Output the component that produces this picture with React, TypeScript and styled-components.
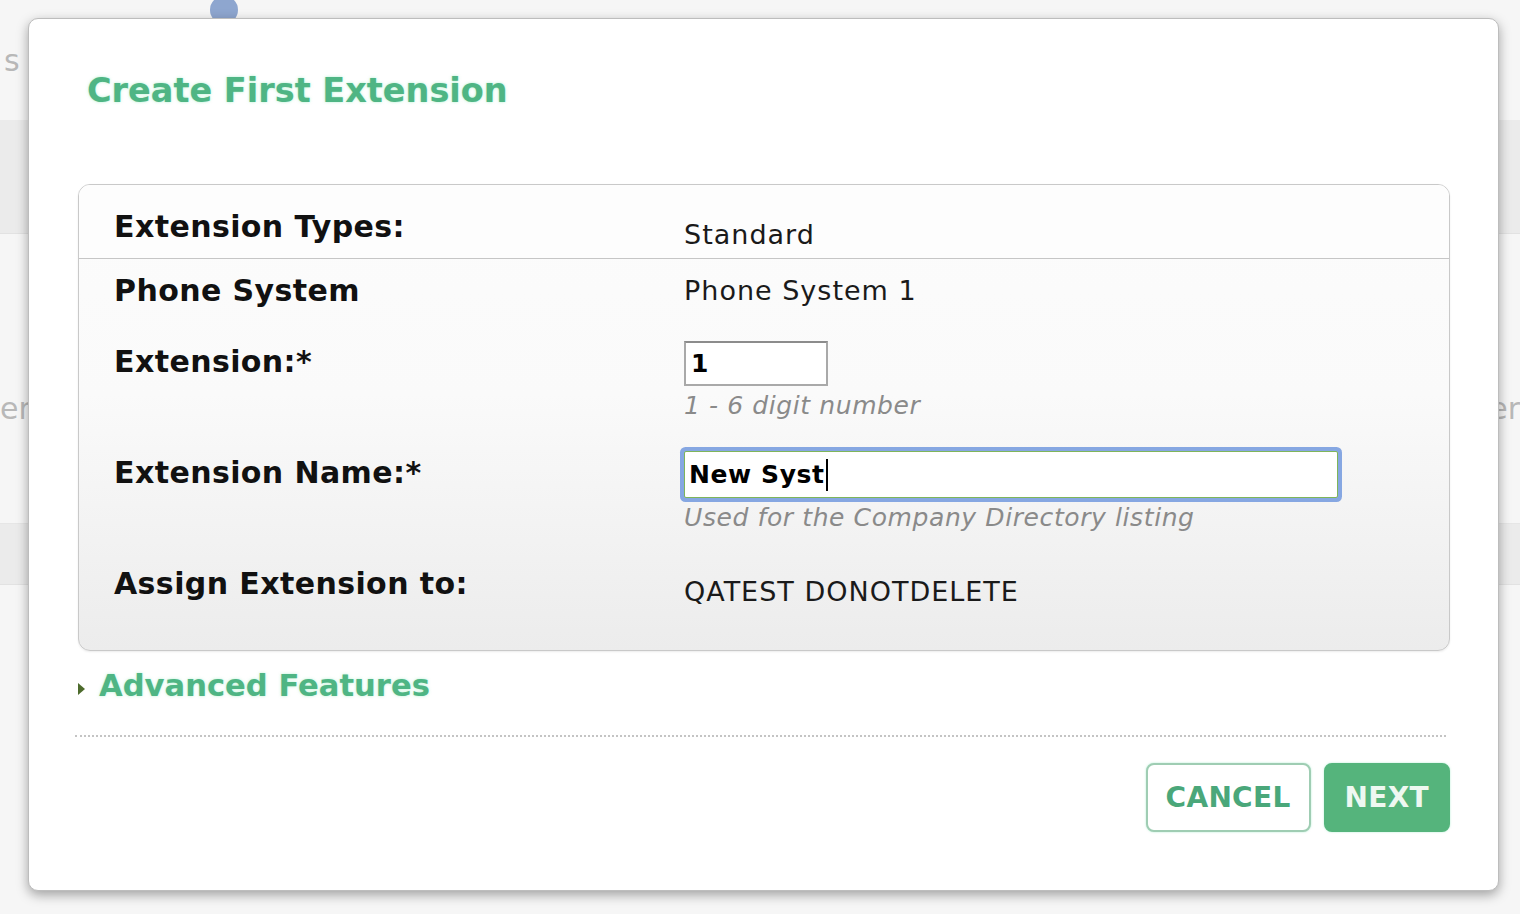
import React from "react";
import styled, { createGlobalStyle } from "styled-components";

const GREEN = "#4fb584";
const FONT = `"DejaVu Sans", Verdana, "Liberation Sans", sans-serif`;

//#region STYLES
const GlobalStyle = createGlobalStyle`
  html, body {
    margin: 0;
    padding: 0;
    background: #f6f6f6;
    font-family: ${FONT};
    overflow: hidden;
  }
`;

const Page = styled.div`
  position: relative;
  width: 1520px;
  height: 914px;
  overflow: hidden;
  background: #f6f6f6;
  color: #b8b8b8;
`;

// the app page sitting behind the modal
const PageHeader = styled.div`
  height: 120px;
  display: flex;
  align-items: center;
  padding-left: 4px;
  font-size: 30px;
  gap: 190px;
`;

const Badge = styled.span`
  width: 28px;
  height: 28px;
  border-radius: 50%;
  background: #8ea6cf;
  align-self: flex-start;
  margin-top: -4px;
`;

const PageBand = styled.div<{ $h: number }>`
  height: ${(p) => p.$h}px;
  background: #ebebeb;
  border-bottom: 1px solid #e2e2e2;
`;

const PageRow = styled.div<{ $h: number }>`
  height: ${(p) => p.$h}px;
  box-sizing: border-box;
  padding-top: 60px;
  display: flex;
  align-items: center;
  justify-content: space-between;
  font-size: 30px;
  border-bottom: 1px solid #e6e6e6;
`;

const Dialog = styled.div`
  position: absolute;
  left: 28px;
  top: 18px;
  width: 1471px;
  height: 873px;
  box-sizing: border-box;
  background: #fff;
  border: 1px solid #bdbdbd;
  border-radius: 10px;
  box-shadow: 0 4px 12px rgba(0, 0, 0, 0.35);
  padding: 52px 48px 0 49px;
  display: flex;
  flex-direction: column;
  color: #111;
`;

const Title = styled.h2`
  margin: 0 0 0 9px;
  font-size: 33.5px;
  line-height: 40px;
  font-weight: bold;
  color: ${GREEN};
  text-shadow: 0 0 3px rgba(110, 230, 170, 0.55);
`;

const Panel = styled.div`
  margin-top: 73px;
  border: 1px solid #c9c9c9;
  border-radius: 12px;
  overflow: hidden;
  background: linear-gradient(#fcfcfc, #fafafa 45%, #ececec);
  box-shadow: 0 1px 2px rgba(0, 0, 0, 0.08);
`;

const PanelHead = styled.div`
  background: #fdfdfd;
  padding: 24px 35px 5px;
  border-bottom: 1px solid #c6c6c6;
`;

const PanelBody = styled.div`
  padding: 14px 35px 40px;
  display: flex;
  flex-direction: column;
`;

const Row = styled.div<{ $gap?: number }>`
  display: grid;
  grid-template-columns: 570px 1fr;
  align-items: start;
  margin-top: ${(p) => p.$gap ?? 0}px;
`;

const Label = styled.div<{ $lh?: number }>`
  font-size: 30px;
  font-weight: bold;
  line-height: ${(p) => p.$lh ?? 36}px;
  color: #111;
  letter-spacing: 0.4px;
`;

const Value = styled.div<{ $drop?: number }>`
  font-size: 27px;
  line-height: 36px;
  letter-spacing: 1px;
  padding-top: ${(p) => p.$drop ?? 0}px;
  color: #1a1a1a;
`;

const Field = styled.div`
  display: flex;
  flex-direction: column;
  align-items: flex-start;
`;

const NumberInput = styled.input`
  width: 144px;
  height: 45px;
  box-sizing: border-box;
  border: 2px solid #a9a9a9;
  border-top-color: #8c8c8c;
  padding: 0 5px;
  font-family: ${FONT};
  font-size: 25px;
  font-weight: bold;
  color: #000;
  background: #fff;
  outline: none;
`;

const TextField = styled.div`
  width: 654px;
  height: 47px;
  box-sizing: border-box;
  border: 1px solid #7fb55a;
  border-radius: 2px;
  box-shadow: 0 0 0 4px #86a7e2;
  background: #fff;
  display: flex;
  align-items: center;
  padding: 0 4px;
  font-size: 25px;
  letter-spacing: 0.6px;
  font-weight: bold;
  color: #000;
`;

const Caret = styled.span`
  display: inline-block;
  width: 2px;
  height: 32px;
  background: #000;
  margin-left: 1px;
`;

const Hint = styled.div<{ $gap: number }>`
  margin-top: ${(p) => p.$gap}px;
  font-size: 25px;
  line-height: 28px;
  letter-spacing: 0.6px;
  font-style: italic;
  color: #8a8a8a;
`;

const Advanced = styled.div`
  margin-top: 17px;
  display: flex;
  align-items: center;
  gap: 14px;
  font-size: 30.6px;
  line-height: 36px;
  font-weight: bold;
  color: ${GREEN};
  text-shadow: 0 0 3px rgba(110, 230, 170, 0.5);
  cursor: pointer;
`;

const Arrow = styled.span`
  width: 0;
  height: 0;
  border-top: 6px solid transparent;
  border-bottom: 6px solid transparent;
  border-left: 7px solid #4d6b2c;
  margin-top: 6px;
`;

const Divider = styled.hr`
  margin: 31px 4px 0 -3px;
  border: 0;
  border-top: 2px dotted #c4c4c4;
  height: 0;
`;

const Actions = styled.div`
  margin-top: 26px;
  display: flex;
  justify-content: flex-end;
  gap: 13px;
`;

const Button = styled.button<{ $primary?: boolean }>`
  height: 69px;
  padding: 0 ${(p) => (p.$primary ? 19 : 18)}px;
  border-radius: 8px;
  font-family: ${FONT};
  font-size: 28px;
  font-weight: bold;
  letter-spacing: 0.3px;
  cursor: pointer;
  border: 2px solid ${(p) => (p.$primary ? "#55b47c" : "#9fcdb3")};
  background: ${(p) => (p.$primary ? "#55b47c" : "#fff")};
  color: ${(p) => (p.$primary ? "#eef8f1" : "#4aa77a")};
  box-shadow: 0 0 2px rgba(90, 220, 160, 0.5);
`;
//#endregion

export default function App() {
  return (
    <Page>
      <GlobalStyle />

      <PageHeader>
        <span>s</span>
        <Badge />
      </PageHeader>
      <PageBand $h={113} />
      <PageRow $h={290}>
        <span>er</span>
        <span>er</span>
      </PageRow>
      <PageBand $h={60} />

      <Dialog>
        <Title>Create First Extension</Title>

        <Panel>
          <PanelHead>
            <Row>
              <Label>Extension Types:</Label>
              <Value $drop={8}>Standard</Value>
            </Row>
          </PanelHead>

          <PanelBody>
            <Row>
              <Label>Phone System</Label>
              <Value>Phone System 1</Value>
            </Row>

            <Row $gap={32}>
              <Label $lh={42}>Extension:*</Label>
              <Field>
                <NumberInput defaultValue="1" />
                <Hint $gap={6}>1 - 6 digit number</Hint>
              </Field>
            </Row>

            <Row $gap={31}>
              <Label $lh={44}>Extension Name:*</Label>
              <Field>
                <TextField>
                  New Syst
                  <Caret />
                </TextField>
                <Hint $gap={6}>Used for the Company Directory listing</Hint>
              </Field>
            </Row>

            <Row $gap={34}>
              <Label>Assign Extension to:</Label>
              <Value $drop={8}>QATEST DONOTDELETE</Value>
            </Row>
          </PanelBody>
        </Panel>

        <Advanced>
          <Arrow />
          Advanced Features
        </Advanced>

        <Divider />

        <Actions>
          <Button>CANCEL</Button>
          <Button $primary>NEXT</Button>
        </Actions>
      </Dialog>
    </Page>
  );
}
